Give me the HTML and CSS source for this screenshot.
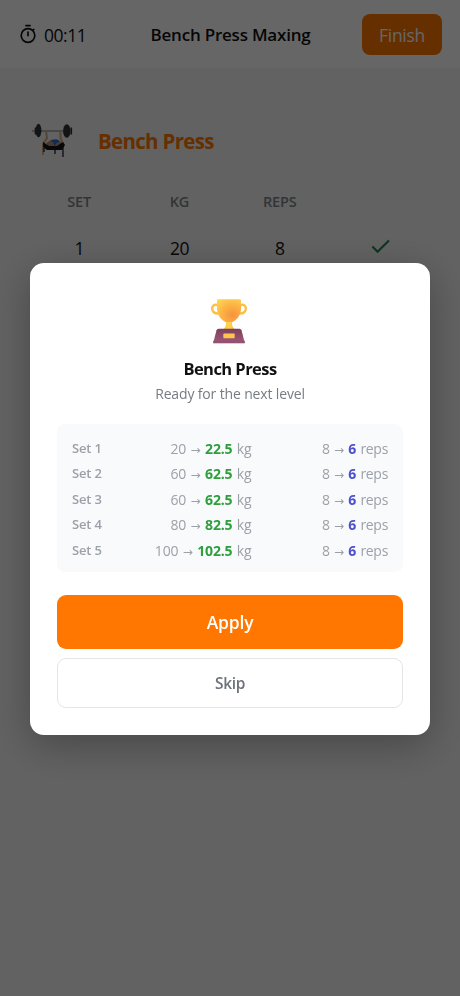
FILE: index.html
```html
<!DOCTYPE html>
<html lang="en">
<head>
<meta charset="utf-8">
<meta name="viewport" content="width=device-width, initial-scale=1">
<title>Bench Press Maxing</title>
<link rel="stylesheet" href="styles.css">
</head>
<body>
<header class="topbar">
  <div class="timer">
    <svg width="18" height="20" viewBox="0 0 18 20" fill="none" stroke="currentColor" stroke-width="1.7"><circle cx="9" cy="11.5" r="6.8"/><path d="M6.3 1.7h5.4M9 7.5v4.8M13.8 6.4l1.400-1.400"/></svg>
    <span>00:11</span>
  </div>
  <h1 class="title">Bench Press Maxing</h1>
  <button class="finish"><span>Finish</span></button>
</header>
<main class="workout">
  <div class="exercise">
    <svg class="exercise-pic" width="54" height="54" viewBox="0 0 54 54" fill="none">
      <path d="M2 17h40" stroke="#77736a" stroke-width="1"/>
      <g fill="#303438"><ellipse cx="8.500" cy="16.500" rx="2.900" ry="6.800"/><ellipse cx="36.800" cy="17" rx="3.700" ry="6.800"/><rect x="4.700" y="13.500" width="1.500" height="7"/><rect x="40.500" y="13.500" width="1.600" height="7"/></g>
      <path d="M16 17l1 7-4 6v11M30.500 17v7l3 7" stroke="#d5ad7d" stroke-width="2"/>
      <path d="M16 29l5-3h7l5 4-4 4H19z" fill="#b98f70"/>
      <path d="M20.500 26l6-.8 3.500 2-4 2-1 3-2-4z" fill="#286bdc"/>
      <path d="M13 28l6 4h8l6-4 2 3-3 5H17l-4-3z" fill="#15151c"/>
      <path d="M14 34v4M25 34v6M33 33v10" stroke="#23232b" stroke-width="1.300"/>
    </svg>
    <h2>Bench Press</h2>
  </div>
  <div class="sets">
    <span class="col">SET</span><span class="col">KG</span><span class="col">REPS</span><span></span>
    <span class="val">1</span><span class="val">20</span><span class="val">8</span>
    <span class="val done"><svg width="20" height="16" viewBox="0 0 20 16" fill="none" stroke="currentColor" stroke-width="2.100"><path d="M1.400 7.600l5.200 5.200L18 1.600"/></svg></span>
  </div>
</main>
<div class="overlay">
  <section class="dialog">
    <svg class="trophy" width="40" height="48" viewBox="0 0 40 48" fill="none">
      <defs>
        <radialGradient id="cup" cx=".65" cy=".7" r=".85"><stop offset="0" stop-color="#f79243"/><stop offset=".45" stop-color="#fbae42"/><stop offset="1" stop-color="#ffd451"/></radialGradient>
        <linearGradient id="stem" x1="0" x2="1"><stop stop-color="#ffc344"/><stop offset=".55" stop-color="#ffd553"/><stop offset="1" stop-color="#f0a73a"/></linearGradient>
        <linearGradient id="base" x1="0" y1="0" x2="0" y2="1"><stop stop-color="#7d405a"/><stop offset="1" stop-color="#a0597b"/></linearGradient>
      </defs>
      <path d="M9.500 8.500C5.500 6.500 3 8.500 3.200 11.800c.3 3.500 3 5.200 7.300 4.500M30.500 8.500c4-2 6.500 0 6.300 3.300-.3 3.500-3 5.200-7.300 4.500" stroke="#fac142" stroke-width="2.400"/>
      <path d="M17 22h6v5c.4 3.300 2 5 5 7.500H12c3-2.500 4.600-4.200 5-7.500z" fill="url(#stem)"/>
      <path d="M8 3.500Q8 2.300 9.200 2.300h21.600Q32 2.300 32 3.500v8.200C32 18.500 27 23.500 23.500 25h-7C13 23.500 8 18.500 8 11.700z" fill="url(#cup)"/>
      <path d="M9.500 31.800h21q1.500 0 2 1.500L35.800 46H4.200L7.500 33.300q.5-1.500 2-1.500z" fill="url(#base)"/>
      <path d="M4.300 43.700h31.400v2.600H4.300z" fill="#925373"/>
      <rect x="14.300" y="36.400" width="11.400" height="4.800" rx=".7" fill="#ffc553"/>
    </svg>
    <h2 class="name">Bench Press</h2>
    <p class="subtitle">Ready for the next level</p>
    <div class="changes">
      <div class="row"><span class="set">Set 1</span><span class="kg">20 <i>→</i> <b>22.5</b> kg</span><span class="reps">8 <i>→</i> <b>6</b> reps</span></div>
      <div class="row"><span class="set">Set 2</span><span class="kg">60 <i>→</i> <b>62.5</b> kg</span><span class="reps">8 <i>→</i> <b>6</b> reps</span></div>
      <div class="row"><span class="set">Set 3</span><span class="kg">60 <i>→</i> <b>62.5</b> kg</span><span class="reps">8 <i>→</i> <b>6</b> reps</span></div>
      <div class="row"><span class="set">Set 4</span><span class="kg">80 <i>→</i> <b>82.5</b> kg</span><span class="reps">8 <i>→</i> <b>6</b> reps</span></div>
      <div class="row"><span class="set">Set 5</span><span class="kg">100 <i>→</i> <b>102.5</b> kg</span><span class="reps">8 <i>→</i> <b>6</b> reps</span></div>
    </div>
    <button class="apply"><span>Apply</span></button>
    <button class="skip"><span>Skip</span></button>
  </section>
</div>
</body>
</html>
```
FILE: styles.css
```css
* { box-sizing: border-box; }
body { margin: 0; min-height: 996px; background: #f4f4f4; color: #111; font-family: "Open Sans", "Noto Sans", sans-serif; overflow: hidden; }
h1, h2, p { margin: 0; }
button { border: 0; padding: 0; font-family: inherit; display: flex; align-items: center; justify-content: center; }

.topbar { height: 68px; background: #fff; display: grid; grid-template-columns: 120px 1fr 120px; align-items: center; padding: 0 18px 0 19px; }
.timer { display: flex; align-items: center; gap: 7px; font-size: 17.500px; letter-spacing: -.45px; line-height: 24px; padding-top: 2px; }
.timer svg { margin-top: -3px; }
.title { font-size: 17px; line-height: 24px; font-weight: 600; letter-spacing: -.22px; text-align: center; white-space: nowrap; padding-top: 2px; }
.finish { justify-self: end; width: 80px; height: 41px; border-radius: 8px; background: #ff7700; color: #fff; font-size: 17.500px; letter-spacing: -.3px; padding-top: 2px; }

.workout { padding: 46px 30px 0; }
.exercise { display: flex; align-items: center; gap: 14px; height: 54px; }
.exercise h2 { font-size: 20.500px; line-height: 28px; font-weight: 700; letter-spacing: -.7px; color: #ff7700; }
.exercise-pic { flex: none; }
.sets { display: grid; grid-template-columns: repeat(4, 100.300px); grid-template-rows: 66px 27px; align-items: center; justify-items: center; }
.col { font-size: 14.500px; font-weight: 600; color: #7c8488; letter-spacing: -.2px; margin-left: -2px; }
.val { font-size: 17.500px; letter-spacing: -.5px; margin-left: -2px; }
.done { color: #198754; display: flex; margin: -2px 0 0; }

.overlay { position: fixed; inset: 0; background: rgba(0, 0, 0, .6); display: flex; align-items: center; justify-content: center; }
.dialog { width: 400px; height: 472px; margin-top: 1px; background: #fff; border-radius: 14px; box-shadow: 0 10px 40px rgba(0, 0, 0, .28); padding: 34px 27px 26px; display: flex; flex-direction: column; }
.trophy { align-self: center; margin-left: -2px; }
.name { margin-top: 12px; text-align: center; font-size: 16.500px; line-height: 24px; font-weight: 700; letter-spacing: -.55px; }
.subtitle { margin-top: 1px; text-align: center; font-size: 14px; line-height: 24px; letter-spacing: -.15px; color: #767c84; }
.changes { margin-top: 18px; height: 148px; border-radius: 8px; background: #f8fafc; padding: 12px 15px 8px; }
.row { display: grid; grid-template-columns: 179.500px 1fr; height: 25.500px; align-items: center; font-size: 14px; letter-spacing: -.15px; word-spacing: .9px; color: #9ca1a8; white-space: nowrap; }
.row span { grid-row: 1; }
.set { grid-column: 1; justify-self: start; font-size: 13px; font-weight: 600; word-spacing: 0; margin-top: -1px; }
.kg { grid-column: 1; justify-self: end; }
.reps { grid-column: 2; justify-self: end; letter-spacing: -.3px; }
.row i { font: 12px "DejaVu Sans", sans-serif; letter-spacing: 0; }
.row b { font-weight: 700; color: #2f9e3c; letter-spacing: -.15px; }
.reps b { color: #4d52cc; }
.apply { flex: none; margin-top: 23px; height: 54px; border-radius: 9px; background: #ff7700; color: #fff; font-size: 17.500px; font-weight: 600; letter-spacing: -.2px; padding-top: 1px; }
.skip { flex: none; margin-top: 9px; height: 50px; border: 1px solid #e3e5e8; border-radius: 9px; background: #fff; color: #6c727b; font-size: 15.500px; font-weight: 600; letter-spacing: -.3px; }
```
